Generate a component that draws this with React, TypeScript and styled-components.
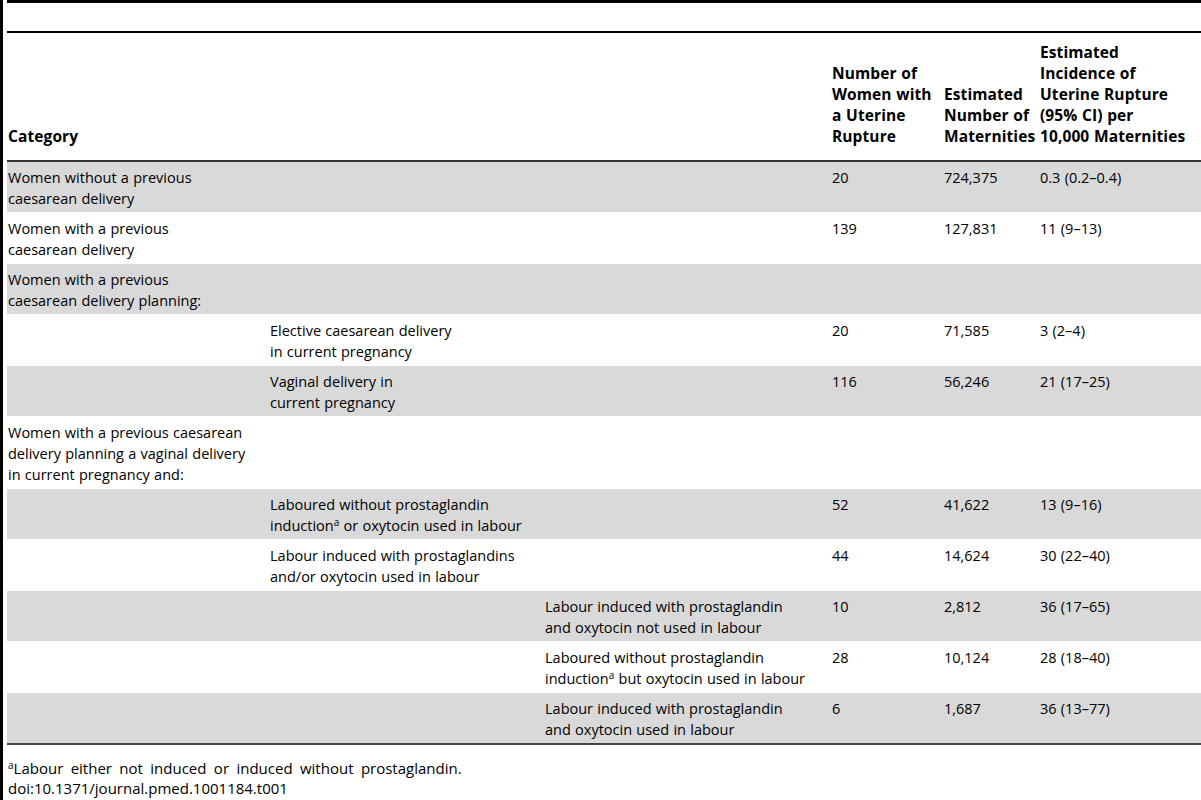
import React from "react";
import styled, { createGlobalStyle } from "styled-components";

const Global = createGlobalStyle`
  html, body { margin: 0; padding: 0; background: #fff; }
  body { font-family: "Open Sans", "Noto Sans", sans-serif; color: #000; }
`;

const Page = styled.div`
  border-left: 3px solid #000;
  padding-left: 4px;
  min-height: 800px;
  box-sizing: border-box;
`;

const Table = styled.table`
  width: 1194px;
  table-layout: fixed;
  border-collapse: collapse;
  font-size: 14.5px;
  line-height: 21px;
  word-spacing: 0.5px;
`;

const TopRow = styled.tr`
  td {
    height: 28px;
    padding: 0;
    border-top: 3px solid #000;
    border-bottom: 2px solid #000;
  }
`;

const HeadCell = styled.th`
  text-align: left;
  vertical-align: bottom;
  font-weight: 700;
  font-size: 15.5px;
  letter-spacing: 0.1px;
  word-spacing: 0.5px;
  white-space: nowrap;
  padding: 0 0 13px 1px;
  height: 114px;
  border-bottom: 2px solid #333;
`;

const Row = styled.tr<{ $shade: boolean }>`
  background: ${(p) => (p.$shade ? "#d9d9d9" : "#fff")};
  border-bottom: 1px solid #fff;
  &:last-child {
    border-bottom: 2px solid #444;
  }
`;

const Cell = styled.td`
  vertical-align: top;
  padding: 5px 0 3px 1px;
  white-space: nowrap;
`;

const Sup = styled.sup`
  font-size: 10px;
  line-height: 0;
  vertical-align: 5px;
`;

const Notes = styled.div`
  margin-top: 13px;
  font-size: 15px;
  line-height: 20px;
  padding-left: 1px;
`;

const FootNote = styled.div`
  word-spacing: 3.5px;
`;

type R = {
  level: number;
  label: React.ReactNode;
  n?: string;
  m?: string;
  inc?: string;
};

const A = () => <Sup>a</Sup>;

const rows: R[] = [
  { level: 0, label: <>Women without a previous<br />caesarean delivery</>, n: "20", m: "724,375", inc: "0.3 (0.2–0.4)" },
  { level: 0, label: <>Women with a previous<br />caesarean delivery</>, n: "139", m: "127,831", inc: "11 (9–13)" },
  { level: 0, label: <>Women with a previous<br />caesarean delivery planning:</> },
  { level: 1, label: <>Elective caesarean delivery<br />in current pregnancy</>, n: "20", m: "71,585", inc: "3 (2–4)" },
  { level: 1, label: <>Vaginal delivery in<br />current pregnancy</>, n: "116", m: "56,246", inc: "21 (17–25)" },
  { level: 0, label: <>Women with a previous caesarean<br />delivery planning a vaginal delivery<br />in current pregnancy and:</> },
  { level: 1, label: <>Laboured without prostaglandin<br />induction<A /> or oxytocin used in labour</>, n: "52", m: "41,622", inc: "13 (9–16)" },
  { level: 1, label: <>Labour induced with prostaglandins<br />and/or oxytocin used in labour</>, n: "44", m: "14,624", inc: "30 (22–40)" },
  { level: 2, label: <>Labour induced with prostaglandin<br />and oxytocin not used in labour</>, n: "10", m: "2,812", inc: "36 (17–65)" },
  { level: 2, label: <>Laboured without prostaglandin<br />induction<A /> but oxytocin used in labour</>, n: "28", m: "10,124", inc: "28 (18–40)" },
  { level: 2, label: <>Labour induced with prostaglandin<br />and oxytocin used in labour</>, n: "6", m: "1,687", inc: "36 (13–77)" },
];

export default function App() {
  return (
    <>
      <Global />
      <Page>
        <Table>
          <colgroup>
            <col style={{ width: 262 }} />
            <col style={{ width: 275 }} />
            <col style={{ width: 287 }} />
            <col style={{ width: 112 }} />
            <col style={{ width: 96 }} />
            <col style={{ width: 162 }} />
          </colgroup>
          <thead>
            <TopRow>
              <td colSpan={6} />
            </TopRow>
            <tr>
              <HeadCell>Category</HeadCell>
              <HeadCell />
              <HeadCell />
              <HeadCell>Number of<br />Women with<br />a Uterine<br />Rupture</HeadCell>
              <HeadCell>Estimated<br />Number of<br />Maternities</HeadCell>
              <HeadCell>Estimated<br />Incidence of<br />Uterine Rupture<br />(95% CI) per<br />10,000 Maternities</HeadCell>
            </tr>
          </thead>
          <tbody>
            {rows.map((r, i) => (
              <Row key={i} $shade={i % 2 === 0}>
                {[0, 1, 2].map((l) => (
                  <Cell key={l}>{r.level === l ? r.label : null}</Cell>
                ))}
                <Cell>{r.n}</Cell>
                <Cell>{r.m}</Cell>
                <Cell>{r.inc}</Cell>
              </Row>
            ))}
          </tbody>
        </Table>
        <Notes>
          <FootNote>
            <A />Labour either not induced or induced without prostaglandin.
          </FootNote>
          <div>doi:10.1371/journal.pmed.1001184.t001</div>
        </Notes>
      </Page>
    </>
  );
}
